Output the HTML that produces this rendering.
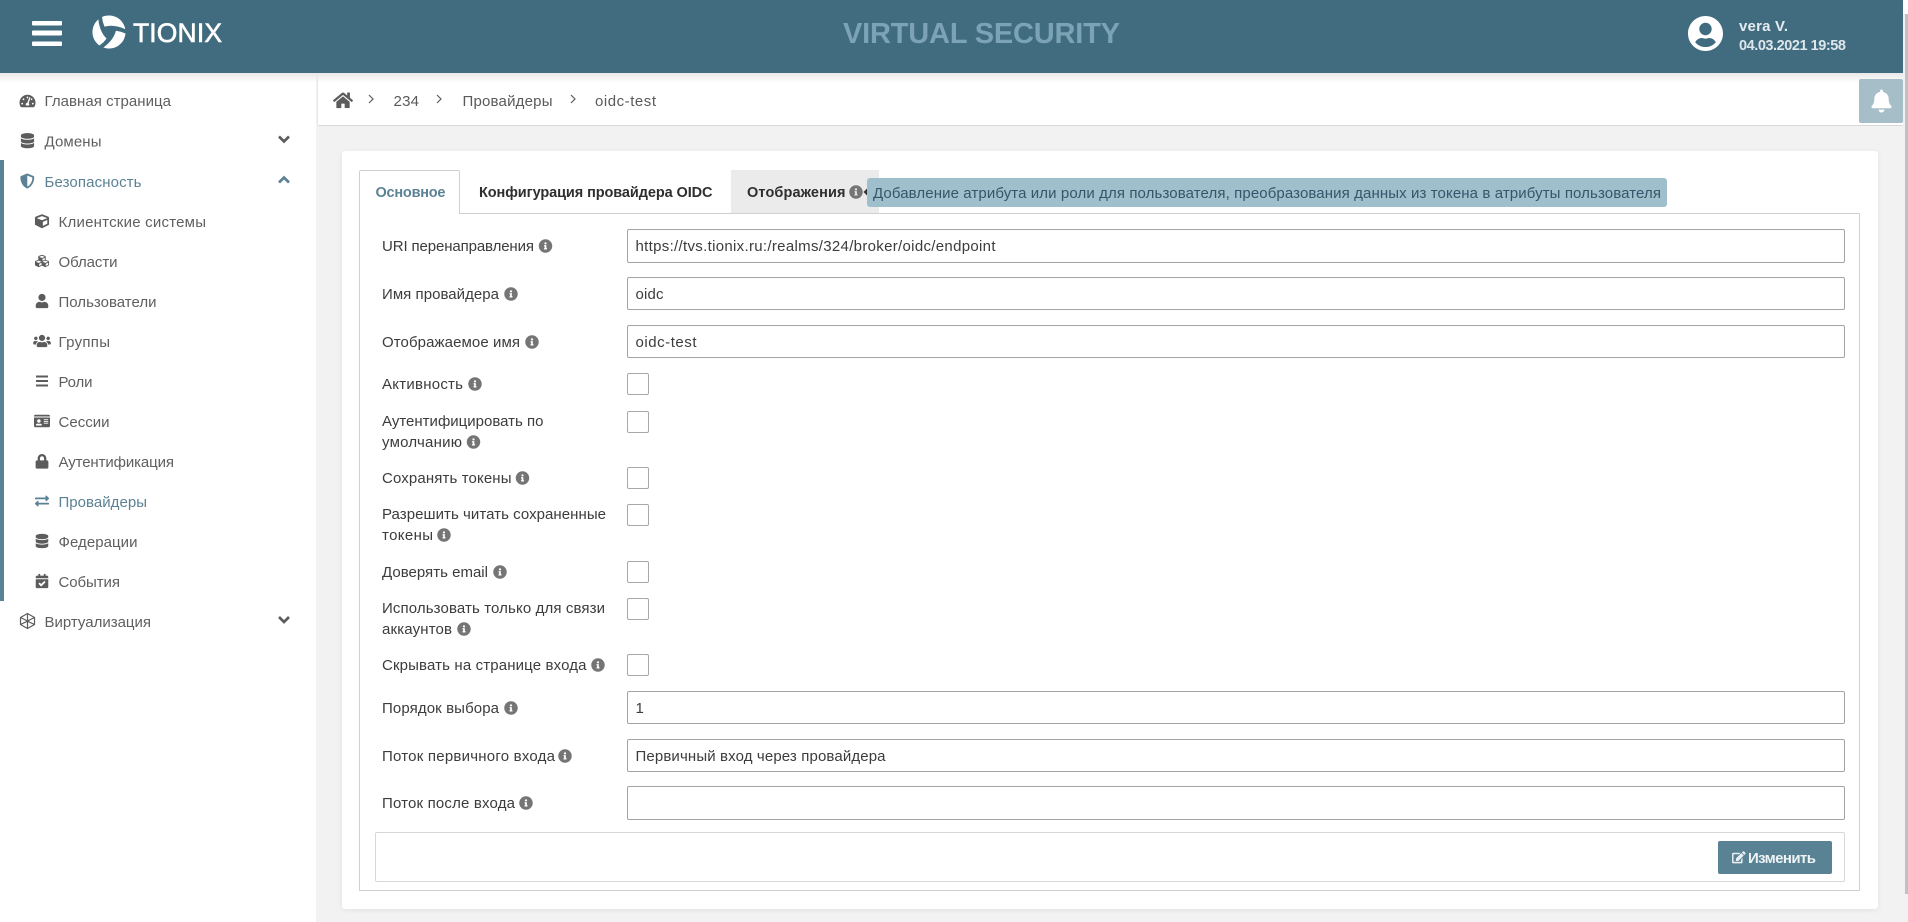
<!DOCTYPE html>
<html lang="ru"><head><meta charset="utf-8"><title>TIONIX Virtual Security</title>
<style>
html,body{margin:0;padding:0;width:1908px;height:922px;overflow:hidden;background:#f2f2f2;font-family:"Liberation Sans",sans-serif}
.b{position:absolute;box-sizing:border-box}
.in{position:absolute;box-sizing:border-box;left:627px;width:1218px;background:#fff;border:1px solid #a3a3a3;border-radius:2px}
.cb{position:absolute;box-sizing:border-box;left:627px;width:22px;height:22px;background:#fff;border:1px solid #a8a8a8;border-radius:2px}
svg.o{position:absolute;left:0;top:0}
text{font-family:"Liberation Sans",sans-serif;font-size:15px}
.s{fill:#5f5f5f}.a{fill:#5a8294}.l{fill:#3c3c3c}.v{fill:#3c3c3c}.c{fill:#5a5a5a}
.ic{fill:#5c5c5c}.ica{fill:#5a8294}
</style></head><body>
<div class="b" style="left:0;top:73px;width:316px;height:849px;background:#fff"></div>
<div class="b" style="left:0;top:160px;width:4px;height:441px;background:#598294"></div>
<div class="b" style="left:317px;top:73px;width:1586px;height:53px;background:#fff;border-bottom:1px solid #d9d9d9;border-left:1px solid #e6e6e6;border-radius:0 0 0 3px"></div>
<div class="b" style="left:0;top:73px;width:1903px;height:10px;background:linear-gradient(#e8e8e8,rgba(255,255,255,0))"></div>
<div class="b" style="left:0;top:0;width:1903px;height:73px;background:#416c7f"></div>
<div class="b" style="left:1859px;top:79px;width:44px;height:44px;background:#a5bec8;border-radius:2px"></div>
<div class="b" style="left:1903px;top:0;width:5px;height:922px;background:#f1f1f1"></div>
<div class="b" style="left:1903px;top:0;width:5px;height:14px;background:#fff"></div>
<div class="b" style="left:1905px;top:14px;width:3px;height:880px;background:#c1c1c1"></div>

<div class="b" style="left:342px;top:151px;width:1536px;height:758px;background:#fff;border-radius:3px;box-shadow:0 1px 6px rgba(0,0,0,.07)"></div>
<div class="b" style="left:359px;top:213px;width:1501px;height:678px;border:1px solid #d0d0d0"></div>
<div class="b" style="left:731px;top:170px;width:148px;height:43px;background:#ebebeb"></div>
<div class="b" style="left:359px;top:170px;width:101px;height:44px;background:#fff;border:1px solid #d0d0d0;border-bottom:none;border-radius:2px 2px 0 0"></div>

<div class="in" style="top:229px;height:34px"></div>
<div class="in" style="top:277px;height:33px"></div>
<div class="in" style="top:325px;height:33px"></div>
<div class="cb" style="top:373px"></div>
<div class="cb" style="top:411px"></div>
<div class="cb" style="top:467px"></div>
<div class="cb" style="top:504px"></div>
<div class="cb" style="top:561px"></div>
<div class="cb" style="top:598px"></div>
<div class="cb" style="top:654px"></div>
<div class="in" style="top:691px;height:33px"></div>
<div class="in" style="top:739px;height:33px"></div>
<div class="in" style="top:786px;height:34px"></div>
<div class="b" style="left:375px;top:832px;width:1470px;height:50px;border:1px solid #d8d8d8;border-radius:2px"></div>
<div class="b" style="left:1718px;top:841px;width:114px;height:33px;background:#598294;border-radius:2px"></div>
<div class="b" style="left:867px;top:178px;width:800px;height:29px;background:#9fbfcc;border-radius:3px"></div>

<svg class="o" width="1908" height="922" viewBox="0 0 1908 922" xmlns="http://www.w3.org/2000/svg">
<defs>
<path id="i" fill="#757575" transform="scale(.0272) translate(-256 -256)" d="M256 8C119.043 8 8 119.083 8 256c0 136.997 111.043 248 248 248s248-111.003 248-248C504 119.083 392.957 8 256 8zm0 110c23.196 0 42 18.804 42 42s-18.804 42-42 42-42-18.804-42-42 18.804-42 42-42zm56 254c0 6.627-5.373 12-12 12h-88c-6.627 0-12-5.373-12-12v-24c0-6.627 5.373-12 12-12h12v-64h-12c-6.627 0-12-5.373-12-12v-24c0-6.627 5.373-12 12-12h64c6.627 0 12 5.373 12 12v100h12c6.627 0 12 5.373 12 12v24z"/>
<path id="db" d="M448 73.143v45.714C448 159.143 347.667 192 224 192S0 159.143 0 118.857V73.143C0 32.857 100.333 0 224 0s224 32.857 224 73.143zM448 176v102.857C448 319.143 347.667 352 224 352S0 319.143 0 278.857V176c48.125 33.143 136.208 48.572 224 48.572S399.874 209.143 448 176zm0 160v102.857C448 479.143 347.667 512 224 512S0 479.143 0 438.857V336c48.125 33.143 136.208 48.572 224 48.572S399.874 369.143 448 336z"/>
<path id="p" fill="#fff" d="M-7-15A16.500 16.500 0 0 1 16.250-2.900Q5-8-4.500-5.400-6.500-10-7-15Z"/>
</defs>

<!-- header -->
<rect x="32" y="21" width="30" height="4.500" rx="1" fill="#fff"/><rect x="32" y="30.500" width="30" height="5" rx="1" fill="#fff"/><rect x="32" y="41.500" width="30" height="4.500" rx="1" fill="#fff"/>
<g transform="translate(109 32)"><use href="#p"/><use href="#p" transform="rotate(120)"/><use href="#p" transform="rotate(240)"/></g>
<text x="133" y="42" style="font-size:26.500px" fill="#fff" stroke="#fff" stroke-width=".6" textLength="89">TIONIX</text>
<text x="843" y="43" style="font-size:29px;font-weight:700" fill="#7ba3b5" textLength="277">VIRTUAL SECURITY</text>
<path fill="#fff" transform="translate(1705.500 33.500) scale(.0706) translate(-248 -256)" d="M248 8C111 8 0 119 0 256s111 248 248 248 248-111 248-248S385 8 248 8zm0 96c48.600 0 88 39.400 88 88s-39.400 88-88 88-88-39.400-88-88 39.400-88 88-88zm0 344c-58.700 0-111.300-26.600-146.500-68.200 18.800-35.400 55.600-59.800 98.500-59.800 2.400 0 4.800.4 7.100 1.100 13 4.200 26.600 6.900 40.900 6.900 14.300 0 28-2.700 40.900-6.900 2.300-.7 4.700-1.100 7.100-1.100 42.900 0 79.700 24.400 98.500 59.800C359.300 421.400 306.700 448 248 448z"/>
<text x="1739" y="31" style="font-size:15px;font-weight:700" fill="#e3ebee" textLength="49">vera V.</text>
<text x="1739" y="50" style="font-size:14.500px;font-weight:700" fill="#dde7eb" textLength="107">04.03.2021 19:58</text>

<!-- bell -->
<path fill="#fff" transform="translate(1881.500 101) scale(.045) translate(-224 -256)" d="M224 512c35.320 0 63.970-28.650 63.970-64H160.030c0 35.350 28.650 64 63.970 64zm215.390-149.710c-19.320-20.760-55.470-51.990-55.470-154.290 0-77.700-54.480-139.900-127.940-155.160V32c0-17.670-14.320-32-31.980-32s-31.980 14.330-31.980 32v20.840C118.560 68.100 64.080 130.300 64.080 208c0 102.300-36.150 133.530-55.470 154.290-6 6.450-8.660 14.160-8.610 21.710.11 16.400 12.980 32 32.100 32h383.800c19.120 0 32-15.600 32.100-32 .05-7.550-2.610-15.270-8.610-21.710z"/>

<!-- breadcrumb -->
<path class="ic" transform="translate(343 100.300) scale(.0347) translate(-288 -256)" d="M280.370 148.260L96 300.110V464a16 16 0 0 0 16 16l112.060-.29a16 16 0 0 0 15.920-16V368a16 16 0 0 1 16-16h64a16 16 0 0 1 16 16v95.640a16 16 0 0 0 16 16.050L464 480a16 16 0 0 0 16-16V300L295.670 148.260a12.190 12.190 0 0 0-15.300 0zM571.600 251.470L488 182.560V44.050a12 12 0 0 0-12-12h-56a12 12 0 0 0-12 12v72.610L318.470 43a48 48 0 0 0-61 0L4.340 251.470a12 12 0 0 0-1.600 16.900l25.500 31A12 12 0 0 0 45.150 301l235.220-193.740a12.190 12.190 0 0 1 15.300 0L530.900 301a12 12 0 0 0 16.900-1.600l25.500-31a12 12 0 0 0-1.700-16.930z"/>
<g fill="none" stroke="#5c5c5c" stroke-width="1.200"><path d="M369 95 373 99 369 103"/><path d="M437 95 441 99 437 103"/><path d="M571 95 575 99 571 103"/></g>
<text x="393.500" y="106" class="c" textLength="25.500">234</text>
<text x="462.500" y="106" class="c" textLength="90">Провайдеры</text>
<text x="595" y="106" class="c" textLength="61">oidc-test</text>

<!-- sidebar text -->
<text x="44.500" y="106" class="s" textLength="126.500">Главная страница</text>
<text x="44.500" y="146.500" class="s" textLength="57">Домены</text>
<text x="44.500" y="187" class="a" textLength="97">Безопасность</text>
<text x="58.500" y="227" class="s" textLength="147.500">Клиентские системы</text>
<text x="58.500" y="267" class="s" textLength="59">Области</text>
<text x="58.500" y="307" class="s" textLength="98">Пользователи</text>
<text x="58.500" y="347" class="s" textLength="51.500">Группы</text>
<text x="58.500" y="387" class="s" textLength="34">Роли</text>
<text x="58.500" y="427" class="s" textLength="51">Сессии</text>
<text x="58.500" y="467" class="s" textLength="115.500">Аутентификация</text>
<text x="58.500" y="507" class="a" textLength="88.500">Провайдеры</text>
<text x="58.500" y="547" class="s" textLength="79">Федерации</text>
<text x="58.500" y="587" class="s" textLength="61.500">События</text>
<text x="44.500" y="627" class="s" textLength="106.500">Виртуализация</text>

<!-- sidebar icons -->
<path class="ic" transform="translate(27.500 101) scale(.0278) translate(-288 -256)" d="M288 32C128.940 32 0 160.940 0 320c0 52.800 14.250 102.260 39.060 144.800 5.610 9.620 16.300 15.200 27.440 15.200h443c11.140 0 21.830-5.580 27.440-15.200C561.750 422.260 576 372.800 576 320c0-159.060-128.940-288-288-288zm0 64c14.710 0 26.580 10.130 30.320 23.650-1.110 2.260-2.640 4.230-3.450 6.670l-9.220 27.670c-5.130 3.490-10.970 6.010-17.640 6.010-17.670 0-32-14.330-32-32S270.330 96 288 96zM96 384c-17.670 0-32-14.330-32-32s14.330-32 32-32 32 14.330 32 32-14.330 32-32 32zm48-160c-17.670 0-32-14.330-32-32s14.330-32 32-32 32 14.330 32 32-14.330 32-32 32zm246.770-72.410l-61.330 184C343.130 347.330 352 364.540 352 384c0 11.720-3.380 22.550-8.880 32H232.880c-5.500-9.450-8.880-20.280-8.880-32 0-33.940 26.500-61.430 59.900-63.590l61.340-184.010c4.170-12.560 17.730-19.450 30.360-15.170 12.570 4.190 19.350 17.770 15.170 30.360zm14.660 57.200l15.520-46.550c3.470-1.290 7.130-2.230 11.050-2.230 17.670 0 32 14.330 32 32s-14.330 32-32 32c-11.380-.01-20.890-6.280-26.570-15.220zM480 384c-17.670 0-32-14.330-32-32s14.330-32 32-32 32 14.330 32 32-14.330 32-32 32z"/>
<use href="#db" class="ic" transform="translate(27.500 140.700) scale(.0295) translate(-224 -256)"/>
<path class="ica" transform="translate(27.300 181) scale(.029) translate(-256 -256)" d="M466.500 83.700l-192-80a48.150 48.150 0 0 0-36.900 0l-192 80C27.700 91.100 16 108.600 16 128c0 198.500 114.500 335.700 221.500 380.300 11.800 4.900 25.100 4.900 36.900 0C360.100 472.600 496 349.300 496 128c0-19.400-11.700-36.900-29.500-44.300zM256.100 446.300l-.1-381 175.900 73.300c-3.300 151.400-82.100 261.100-175.800 307.700z"/>
<path class="ic" transform="translate(42 221.300) scale(.0275) translate(-256 -256)" d="M239.100 6.300l-208 78c-18.700 7-31.100 25-31.100 45v225.100c0 18.200 10.300 34.800 26.500 42.900l208 104c13.500 6.800 29.400 6.800 42.900 0l208-104c16.300-8.100 26.500-24.800 26.500-42.900V129.300c0-20-12.400-37.900-31.100-44.900l-208-78C262 2.200 250 2.200 239.100 6.300zM256 68.400l192 72v1.100l-192 78-192-78v-1.100l192-72zm32 356V275.500l160-65v133.900l-160 80z"/>
<path class="ic" transform="translate(42 261) scale(.0275) translate(-256 -256)" d="M488.600 250.200L392 214V105.500c0-15-9.300-28.400-23.400-33.700l-100-37.500c-8.100-3.100-17.100-3.100-25.300 0l-100 37.500c-14.100 5.300-23.400 18.700-23.400 33.700V214l-96.600 36.200C9.300 255.500 0 268.900 0 283.900V394c0 13.600 7.700 26.100 19.900 32.200l100 50c10.100 5.100 22.100 5.100 32.200 0l103.900-52 103.900 52c10.100 5.100 22.100 5.100 32.200 0l100-50c12.200-6.100 19.900-18.600 19.900-32.200V283.900c0-15-9.300-28.400-23.400-33.700zM358 214.800l-85 31.900v-68.200l85-37v73.300zM154 104.100l102-38.200 102 38.200v.6l-102 41.400-102-41.400v-.6zm84 291.100l-85 42.500v-79.100l85-38.800v75.400zm0-112l-102 41.400-102-41.400v-.6l102-38.200 102 38.200v.6zm240 112l-85 42.500v-79.100l85-38.800v75.400zm0-112l-102 41.400-102-41.400v-.6l102-38.200 102 38.200v.6z"/>
<path class="ic" transform="translate(42 301) scale(.028) translate(-224 -256)" d="M224 256c70.700 0 128-57.300 128-128S294.700 0 224 0 96 57.300 96 128s57.300 128 128 128zm89.600 32h-16.700c-22.200 10.200-46.900 16-72.900 16s-50.600-5.800-72.900-16h-16.700C60.200 288 0 348.200 0 422.400V464c0 26.500 21.500 48 48 48h352c26.500 0 48-21.500 48-48v-41.600c0-74.200-60.200-134.400-134.400-134.400z"/>
<path class="ic" transform="translate(42 341) scale(.0275) translate(-320 -256)" d="M96 224c35.300 0 64-28.700 64-64s-28.700-64-64-64-64 28.700-64 64 28.700 64 64 64zm448 0c35.300 0 64-28.700 64-64s-28.700-64-64-64-64 28.700-64 64 28.700 64 64 64zm32 32h-64c-17.600 0-33.500 7.100-45.100 18.600 40.300 22.100 68.900 62 75.100 109.400h66c17.700 0 32-14.300 32-32v-32c0-35.300-28.700-64-64-64zm-256 0c61.900 0 112-50.100 112-112S381.900 32 320 32 208 82.100 208 144s50.100 112 112 112zm76.800 32h-8.300c-20.800 10-43.900 16-68.500 16s-47.600-6-68.500-16h-8.300C179.600 288 128 339.600 128 403.200V432c0 26.500 21.500 48 48 48h288c26.500 0 48-21.500 48-48v-28.800c0-63.600-51.600-115.200-115.200-115.200zm-223.700-13.400C161.500 263.100 145.600 256 128 256H64c-35.300 0-64 28.700-64 64v32c0 17.700 14.300 32 32 32h65.900c6.300-47.400 34.900-87.300 75.200-109.400z"/>
<g class="ic"><rect x="36" y="375.500" width="12" height="2"/><rect x="36" y="380" width="12" height="2"/><rect x="36" y="384.500" width="12" height="2"/></g>
<path class="ic" transform="translate(42 421) scale(.0278) translate(-288 -256)" d="M528 32H48C21.500 32 0 53.500 0 80v16h576V80c0-26.500-21.500-48-48-48zM0 432c0 26.500 21.500 48 48 48h480c26.500 0 48-21.500 48-48V128H0v304zm352-232c0-4.400 3.600-8 8-8h144c4.400 0 8 3.600 8 8v16c0 4.400-3.600 8-8 8H360c-4.400 0-8-3.600-8-8v-16zm0 64c0-4.400 3.600-8 8-8h144c4.400 0 8 3.600 8 8v16c0 4.400-3.600 8-8 8H360c-4.400 0-8-3.600-8-8v-16zm0 64c0-4.400 3.600-8 8-8h144c4.400 0 8 3.600 8 8v16c0 4.400-3.600 8-8 8H360c-4.400 0-8-3.600-8-8v-16zM176 192c35.300 0 64 28.700 64 64s-28.700 64-64 64-64-28.700-64-64 28.700-64 64-64zM67.100 396.200C75.500 370.500 99.600 352 128 352h8.200c12.300 5.100 25.700 8 39.800 8s27.600-2.900 39.800-8h8.200c28.400 0 52.500 18.500 60.900 44.200 3.200 9.900-5.200 19.800-15.600 19.800H82.700c-10.400 0-18.800-10-15.600-19.800z"/>
<path class="ic" transform="translate(42 461.300) scale(.0285) translate(-224 -256)" d="M400 224h-24v-72C376 68.200 307.800 0 224 0S72 68.200 72 152v72H48c-26.500 0-48 21.500-48 48v192c0 26.500 21.500 48 48 48h352c26.500 0 48-21.500 48-48V272c0-26.500-21.500-48-48-48zm-104 0H152v-72c0-39.700 32.300-72 72-72s72 32.300 72 72v72z"/>
<path class="ica" transform="translate(42 501) scale(.0275) translate(-256 -256)" d="M0 168v-16c0-13.255 10.745-24 24-24h360V80c0-21.367 25.899-32.042 40.971-16.971l80 80c9.372 9.373 9.372 24.569 0 33.941l-80 80C409.956 271.982 384 261.456 384 240v-48H24c-13.255 0-24-10.745-24-24zm488 152H128v-48c0-21.314-25.862-32.080-40.971-16.971l-80 80c-9.372 9.373-9.372 24.569 0 33.941l80 80C102.057 463.997 128 453.437 128 432v-48h360c13.255 0 24-10.745 24-24v-16c0-13.255-10.745-24-24-24z"/>
<use href="#db" class="ic" transform="translate(42 541) scale(.028) translate(-224 -256)"/>
<path class="ic" transform="translate(42 581) scale(.028) translate(-224 -256)" d="M436 160H12c-6.627 0-12-5.373-12-12v-36c0-26.510 21.490-48 48-48h48V12c0-6.627 5.373-12 12-12h40c6.627 0 12 5.373 12 12v52h128V12c0-6.627 5.373-12 12-12h40c6.627 0 12 5.373 12 12v52h48c26.510 0 48 21.490 48 48v36c0 6.627-5.373 12-12 12zM12 192h424c6.627 0 12 5.373 12 12v260c0 26.510-21.490 48-48 48H48c-26.510 0-48-21.490-48-48V204c0-6.627 5.373-12 12-12zm333.296 95.947l-28.169-28.398c-4.667-4.705-12.265-4.736-16.970-.068L194.260 364.545l-45.900-46.272c-4.667-4.705-12.265-4.736-16.970-.068l-28.397 28.170c-4.705 4.667-4.736 12.265-.068 16.970l82.601 83.269c4.667 4.705 12.265 4.736 16.970.068l142.800-141.656c4.705-4.667 4.736-12.265.068-16.970z"/>
<g fill="none" stroke="#5c5c5c" stroke-width="1.200" stroke-linejoin="round"><path d="M27.500 613.500 34.500 617.500V624.500L27.500 628.500 20.500 624.500V617.500Z"/><path d="M20.500 617.500 27.500 621 34.500 617.500M27.500 621V628.500M20.500 624.500 27.500 621.200 34.500 624.500M27.500 613.500V621"/></g>
<g fill="none" stroke="#5c5c5c" stroke-width="2.700"><path d="M279 136.500 284 141.500 289 136.500"/><path d="M279 617 284 622 289 617"/></g>
<path d="M279 182.500 284 177.500 289 182.500" fill="none" stroke="#5a8294" stroke-width="2.700"/>

<!-- tabs -->
<text x="375.500" y="197" style="font-size:14.500px;font-weight:700" fill="#5a8294" textLength="70">Основное</text>
<text x="479" y="197" style="font-size:14.500px;font-weight:700" fill="#2e2e2e" textLength="233.500">Конфигурация провайдера OIDC</text>
<text x="747" y="197" style="font-size:14.500px;font-weight:700" fill="#2e2e2e" textLength="98.500">Отображения</text>
<use href="#i" x="856" y="192"/>
<path d="M867 188.500 863.500 192 867 195.500Z" fill="#333"/>
<text x="873" y="198" style="font-size:15px" fill="#33576a" textLength="788">Добавление атрибута или роли для пользователя, преобразования данных из токена в атрибуты пользователя</text>

<!-- labels -->
<text x="382" y="251" class="l" textLength="152">URI перенаправления</text><use href="#i" x="545.500" y="246"/>
<text x="382" y="299" class="l" textLength="117">Имя провайдера</text><use href="#i" x="511" y="294"/>
<text x="382" y="347" class="l" textLength="138">Отображаемое имя</text><use href="#i" x="532" y="342"/>
<text x="382" y="389" class="l" textLength="81">Активность</text><use href="#i" x="475" y="384"/>
<text x="382" y="426" class="l" textLength="161.500">Аутентифицировать по</text>
<text x="382" y="447" class="l" textLength="80">умолчанию</text><use href="#i" x="473.500" y="442"/>
<text x="382" y="483" class="l" textLength="129.500">Сохранять токены</text><use href="#i" x="522.500" y="478"/>
<text x="382" y="519" class="l" textLength="224">Разрешить читать сохраненные</text>
<text x="382" y="540" class="l" textLength="51">токены</text><use href="#i" x="444" y="535"/>
<text x="382" y="577" class="l" textLength="106">Доверять email</text><use href="#i" x="500" y="572"/>
<text x="382" y="613" class="l" textLength="223">Использовать только для связи</text>
<text x="382" y="634" class="l" textLength="70">аккаунтов</text><use href="#i" x="464" y="629"/>
<text x="382" y="670" class="l" textLength="204.500">Скрывать на странице входа</text><use href="#i" x="598" y="665"/>
<text x="382" y="713" class="l" textLength="117">Порядок выбора</text><use href="#i" x="511" y="708"/>
<text x="382" y="761" class="l" textLength="173">Поток первичного входа</text><use href="#i" x="565" y="756"/>
<text x="382" y="808" class="l" textLength="133">Поток после входа</text><use href="#i" x="526" y="803"/>

<!-- values -->
<text x="635.500" y="251" class="v" textLength="360">https://tvs.tionix.ru:/realms/324/broker/oidc/endpoint</text>
<text x="635.500" y="299" class="v" textLength="28">oidc</text>
<text x="635.500" y="347" class="v" textLength="61">oidc-test</text>
<text x="635.500" y="713" class="v">1</text>
<text x="635.500" y="761" class="v" textLength="250">Первичный вход через провайдера</text>

<!-- button -->
<path fill="#e8eef1" transform="translate(1738.800 857.300) scale(.0235) translate(-288 -256)" d="M402.600 83.200l90.200 90.200c3.800 3.800 3.800 10 0 13.800L274.400 405.600l-92.800 10.300c-12.400 1.400-22.900-9.100-21.500-21.500l10.300-92.800L388.800 83.200c3.800-3.800 10-3.800 13.800 0zm162-22.900l-48.800-48.800c-15.200-15.200-39.900-15.200-55.200 0l-35.400 35.400c-3.800 3.800-3.800 10 0 13.800l90.200 90.200c3.800 3.800 10 3.800 13.800 0l35.400-35.400c15.200-15.300 15.200-40 0-55.200zM384 346.200V448H64V128h229.800c3.200 0 6.200-1.300 8.500-3.500l40-40c7.600-7.600 2.200-20.500-8.500-20.500H48C21.500 64 0 85.500 0 112v352c0 26.500 21.500 48 48 48h352c26.500 0 48-21.500 48-48V306.200c0-10.700-12.900-16-20.500-8.500l-40 40c-2.200 2.300-3.500 5.300-3.500 8.500z"/>
<text x="1748" y="863" style="font-size:15px;font-weight:700" fill="#eef3f5" textLength="68">Изменить</text>
</svg>
</body></html>
